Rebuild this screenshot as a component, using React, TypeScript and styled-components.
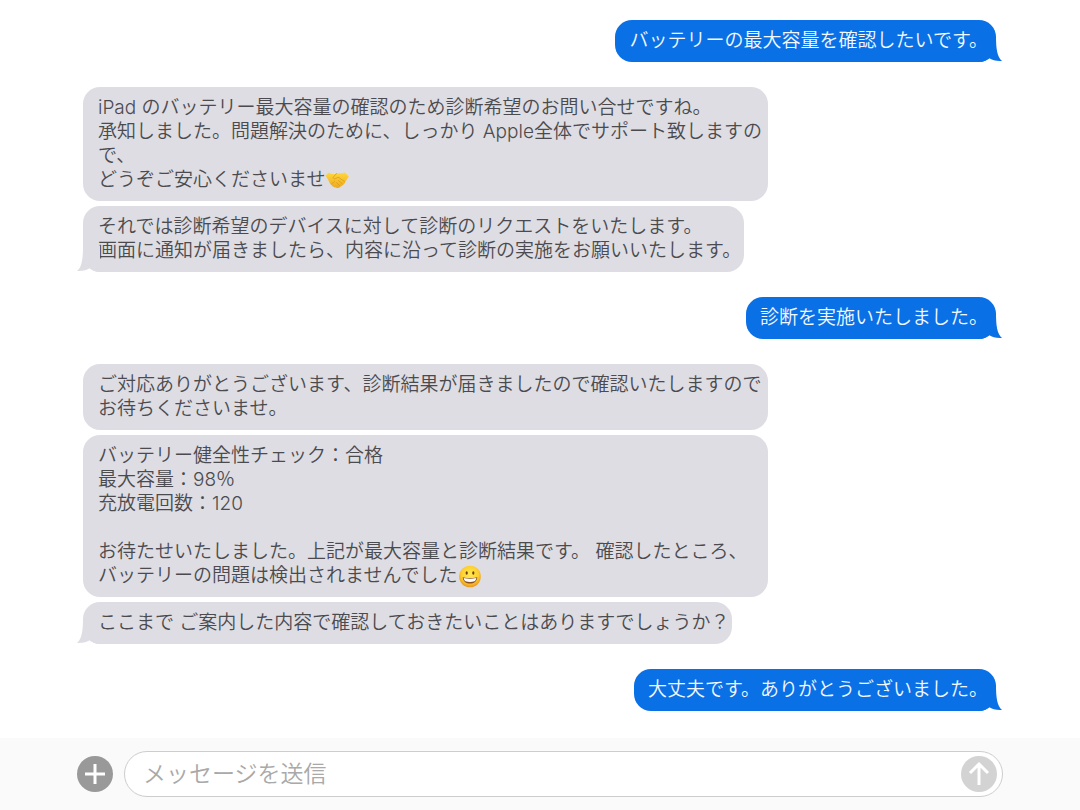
import React from 'react';
import styled, { createGlobalStyle, css } from 'styled-components';

const GlobalStyle = createGlobalStyle`
  *, *::before, *::after { box-sizing: border-box; }
  body {
    margin: 0;
    background: #ffffff;
    font-family: Inter, "Noto Sans CJK JP", sans-serif;
    font-weight: 350;
  }
  button, input { font: inherit; }
`;

const Page = styled.div`
  display: flex;
  flex-direction: column;
  min-height: 100vh;
`;

const Thread = styled.main`
  flex: 1;
  display: flex;
  flex-direction: column;
  gap: 25px;
  padding: 20px 84px 26px 83px;
`;

type Side = 'sent' | 'received';

const Group = styled.section<{ $side: Side }>`
  display: flex;
  flex-direction: column;
  gap: 5px;
  align-items: ${({ $side }) => ($side === 'sent' ? 'flex-end' : 'flex-start')};
`;

const Bubble = styled.p<{ $side: Side }>`
  position: relative;
  max-width: 75%;
  margin: 0;
  border-radius: 17px;
  font-size: 19px;
  line-height: 24px;
  white-space: pre-wrap;
  ${({ $side }) =>
    $side === 'sent'
      ? css`
          padding: 9px 8px 9px 14px;
          background: #0a70e6;
          color: #f2f8ff;
        `
      : css`
          padding: 9px 3px 9px 15px;
          background: #dedde3;
          color: #4b4b4f;
        `}
`;

const TailShape = styled.svg<{ $side: Side }>`
  position: absolute;
  bottom: 0;
  width: 24px;
  height: 26px;
  ${({ $side }) =>
    $side === 'sent'
      ? css`
          right: -7px;
          fill: #0a70e6;
        `
      : css`
          left: -7px;
          fill: #dedde3;
          transform: scaleX(-1);
        `}
`;

const Emoji = styled.svg`
  width: 24px;
  height: 24px;
  vertical-align: top;
`;

const Composer = styled.form`
  display: flex;
  align-items: center;
  gap: 11px;
  padding: 13px 77px;
  background: #fafafa;
`;

const RoundButton = styled.button<{ $color: string }>`
  flex: none;
  display: flex;
  width: 36px;
  height: 36px;
  padding: 0;
  border: 0;
  border-radius: 50%;
  background: ${({ $color }) => $color};
  color: #ffffff;
`;

const Field = styled.div`
  flex: 1;
  display: flex;
  align-items: center;
  height: 46px;
  padding: 0 5px 0 18px;
  border: 1px solid #cdcdcd;
  border-radius: 23px;
  background: #ffffff;
`;

const MessageInput = styled.input`
  flex: 1;
  min-width: 0;
  height: 36px;
  padding: 0;
  border: 0;
  outline: 0;
  background: transparent;
  color: #4b4b4f;
  font-size: 23px;
  &::placeholder {
    color: #a9a9a9;
    opacity: 1;
  }
`;

function Tail({ side }: { side: Side }) {
  return (
    <TailShape $side={side} viewBox="0 0 24 26" aria-hidden="true">
      <path d="M17 0C17 12 18 21 23 25C18 25.500 13 24 10 22C7 24.500 4 26 0 26V0Z" />
    </TailShape>
  );
}

function Handshake() {
  return (
    <Emoji viewBox="0 0 24 24" role="img" aria-label="握手">
      <defs>
        <linearGradient id="skin" x1="0" y1="0" x2="0" y2="1">
          <stop offset="0" stopColor="#ffd83c" />
          <stop offset="1" stopColor="#eda81e" />
        </linearGradient>
      </defs>
      <path
        d="M.5 7.500L4 4.500C7 6.500 9 6.500 11.500 5.500C14.500 5 17 5.500 20 4.500L23.800 8.500L20.500 13.500C20 15.500 18 17 16.500 18C14.500 19.500 12.500 21 11 19.500C8.500 19.500 6.500 17.500 5 15.500C4 13.500 3 11 .5 7.500Z"
        fill="url(#skin)"
      />
      <path
        d="M11.500 5.500L8 9.500C8.500 11.500 11 11 13 9L19.500 13.500M13.500 12.500L17 15.500M11.500 14.500L14.500 17.500M6.500 16L9.500 13.500"
        fill="none"
        stroke="#d99a20"
        strokeWidth=".8"
        strokeLinecap="round"
        strokeLinejoin="round"
      />
    </Emoji>
  );
}

function Grin() {
  return (
    <Emoji viewBox="0 0 24 24" role="img" aria-label="笑顔">
      <defs>
        <radialGradient id="face" cx=".5" cy=".4" r=".6">
          <stop offset="0" stopColor="#ffe94f" />
          <stop offset=".65" stopColor="#fdcf31" />
          <stop offset="1" stopColor="#e8951f" />
        </radialGradient>
      </defs>
      <circle cx="13" cy="12.500" r="10.800" fill="url(#face)" />
      <ellipse cx="9.700" cy="9" rx="1.100" ry="1.700" fill="#6b3c12" />
      <ellipse cx="16.300" cy="9" rx="1.100" ry="1.700" fill="#6b3c12" />
      <path
        d="M5.700 13.200C10 14.400 16 14.400 20.300 13.200C20 17.200 17 19.600 13 19.600S6 17.200 5.700 13.200Z"
        fill="#8a4f1c"
      />
      <path
        d="M6.700 14.100C10.500 15.100 15.500 15.100 19.300 14.100C19 15.800 18.500 16.800 17.500 17.300C14.500 18.100 11.500 18.100 8.500 17.300C7.500 16.800 7 15.800 6.700 14.100Z"
        fill="#ffffff"
      />
    </Emoji>
  );
}

interface Message {
  side: Side;
  bubbles: React.ReactNode[];
}

const messages: Message[] = [
  { side: 'sent', bubbles: ['バッテリーの最大容量を確認したいです。'] },
  {
    side: 'received',
    bubbles: [
      <>
        {'iPad のバッテリー最大容量の確認のため診断希望のお問い合せですね。\n承知しました。問題解決のために、しっかり Apple全体でサポート致しますので、\nどうぞご安心くださいませ'}
        <Handshake />
      </>,
      'それでは診断希望のデバイスに対して診断のリクエストをいたします。\n画面に通知が届きましたら、内容に沿って診断の実施をお願いいたします。',
    ],
  },
  { side: 'sent', bubbles: ['診断を実施いたしました。'] },
  {
    side: 'received',
    bubbles: [
      'ご対応ありがとうございます、診断結果が届きましたので確認いたしますのでお待ちくださいませ。',
      <>
        {'バッテリー健全性チェック：合格\n最大容量：98％\n充放電回数：120\n\nお待たせいたしました。上記が最大容量と診断結果です。 確認したところ、バッテリーの問題は検出されませんでした'}
        <Grin />
      </>,
      'ここまで ご案内した内容で確認しておきたいことはありますでしょうか？',
    ],
  },
  { side: 'sent', bubbles: ['大丈夫です。ありがとうございました。'] },
];

export default function App() {
  return (
    <Page lang="ja">
      <GlobalStyle />
      <Thread>
        {messages.map(({ side, bubbles }, i) => (
          <Group key={i} $side={side}>
            {bubbles.map((content, j) => (
              <Bubble key={j} $side={side}>
                {content}
                {j === bubbles.length - 1 && <Tail side={side} />}
              </Bubble>
            ))}
          </Group>
        ))}
      </Thread>
      <Composer onSubmit={(e) => e.preventDefault()}>
        <RoundButton type="button" $color="#999999" aria-label="追加">
          <svg width="36" height="36" viewBox="0 0 36 36" aria-hidden="true">
            <path d="M18 8V28M8 18H28" stroke="currentColor" strokeWidth="3" />
          </svg>
        </RoundButton>
        <Field>
          <MessageInput type="text" placeholder="メッセージを送信" aria-label="メッセージを送信" />
          <RoundButton type="submit" $color="#d3d3d3" aria-label="送信">
            <svg width="36" height="36" viewBox="0 0 36 36" aria-hidden="true">
              <path
                d="M18 29V8.500M9 17L18 8L27 17"
                fill="none"
                stroke="currentColor"
                strokeWidth="3"
              />
            </svg>
          </RoundButton>
        </Field>
      </Composer>
    </Page>
  );
}
